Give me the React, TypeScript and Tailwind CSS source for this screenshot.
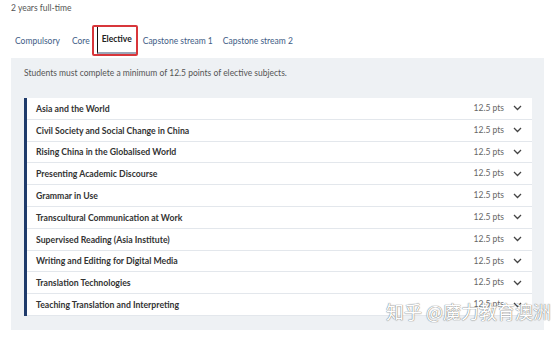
const subjects = [
  "Asia and the World",
  "Civil Society and Social Change in China",
  "Rising China in the Globalised World",
  "Presenting Academic Discourse",
  "Grammar in Use",
  "Transcultural Communication at Work",
  "Supervised Reading (Asia Institute)",
  "Writing and Editing for Digital Media",
  "Translation Technologies",
  "Teaching Translation and Interpreting",
];

const Chevron = () => (
  <svg width="9" height="6" viewBox="0 0 9 6" fill="none" className="ml-[9px]">
    <path d="M1 1l3.5 3.5L8 1" stroke="#444" strokeWidth="1.3" />
  </svg>
);

export default function App() {
  return (
    <div className="relative w-[553px] h-[337px] bg-white overflow-hidden font-['Lato',sans-serif] text-[#333]">
      <div className="pl-[11px] pt-[2px] h-[14px] text-[8.5px] leading-[12px] text-[#555]">2 years full-time</div>

      <div className="flex items-end h-[42px] pl-[15px] text-[8.5px] text-[#3f5d86]">
        <div className="h-[29px] flex items-center">Compulsory</div>
        <div className="h-[29px] flex items-center ml-[12px]">Core</div>
        <div className="h-[31px] w-[46px] ml-[2px] border-2 border-[#d8363b] rounded-[2px] flex">
          <div className="flex-1 ml-[3px] border-l-[1.5px] border-[#111] border-b-2 border-b-[#9aa6b8] flex items-center justify-center font-bold text-[#222] pb-[1px]">
            Elective
          </div>
        </div>
        <div className="h-[29px] flex items-center ml-[5px]">Capstone stream 1</div>
        <div className="h-[29px] flex items-center ml-[10px]">Capstone stream 2</div>
      </div>

      <div className="mx-[11px] mt-[2px] w-[533px] h-[272px] bg-[#eef1f4] px-[13px] pt-[10px]">
        <p className="text-[8.5px] leading-[11px] text-[#555] h-[30px]">
          Students must complete a minimum of 12.5 points of elective subjects.
        </p>
        <div className="border-l-[3px] border-[#1f3b6b] bg-white w-[508px]">
          {subjects.map((s) => (
            <div
              key={s}
              className="h-[21.8px] flex items-center pl-[9px] pr-[10px] border-b border-[#e3e7ec] text-[8.5px]"
            >
              <span className="flex-1 font-bold text-[#333] text-[8.7px]">{s}</span>
              <span className="text-[#666]">12.5 pts</span>
              <Chevron />
            </div>
          ))}
        </div>
      </div>

      <div className="absolute left-[386px] top-[299px] text-[18px] leading-[24px] text-white font-['Noto_Sans_CJK_SC',sans-serif] [text-shadow:0_0_1px_#777,0_0_1px_#777]">
        知乎 @魔力教育澳洲
      </div>
    </div>
  );
}
